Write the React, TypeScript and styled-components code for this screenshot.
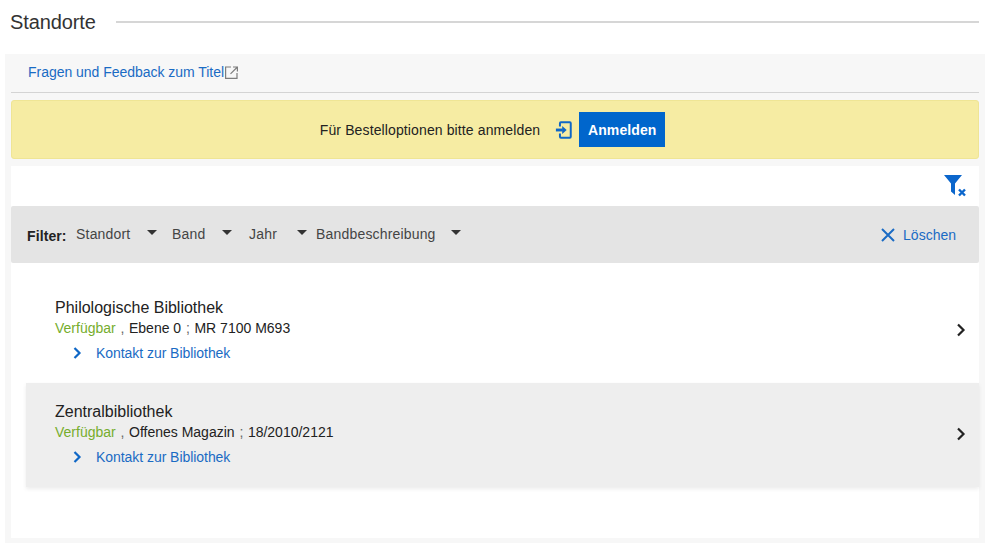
import styled, { createGlobalStyle } from 'styled-components';

const GlobalStyle = createGlobalStyle`
  html, body {
    margin: 0;
    padding: 0;
    background: #fff;
  }
  * {
    box-sizing: border-box;
  }
  body {
    font-family: 'Liberation Sans', Arial, sans-serif;
    color: #222;
  }
`;

const Page = styled.div`
  width: 990px;
  height: 551px;
  overflow: hidden;
  padding: 0 5px;
`;

const Heading = styled.div`
  height: 54px;
  display: flex;
  align-items: flex-start;
  gap: 20px;
  padding: 10px 6px 0 5px;
`;

const HeadingText = styled.h2`
  margin: 0;
  font-size: 20px;
  line-height: 24px;
  font-weight: 400;
  letter-spacing: -0.1px;
  color: #333;
`;

const HeadingRule = styled.div`
  flex: 1;
  height: 2px;
  margin-top: 11px;
  background: #d6d6d6;
`;

const Panel = styled.div`
  height: 489px;
  background: #f7f7f7;
  padding: 0 6px 5px;
  display: flex;
  flex-direction: column;
`;

const LinkRow = styled.div`
  height: 39px;
  flex: none;
  display: flex;
  align-items: center;
  padding: 0 0 2px 17px;
  border-bottom: 1px solid #d4d4d4;
`;

const Link = styled.a`
  color: #1a6bc4;
  font-size: 14px;
  letter-spacing: -0.03px;
  text-decoration: none;
`;

const ExternalIcon = styled.svg`
  width: 13px;
  height: 13px;
  margin-left: 1px;
  flex: none;
`;

const Notice = styled.div`
  height: 59px;
  flex: none;
  margin-top: 7px;
  background: #f6eca3;
  border: 1px solid #efe595;
  border-radius: 3px;
  display: flex;
  align-items: center;
  justify-content: center;
  padding-right: 5px;
  font-size: 14px;
  letter-spacing: 0.12px;
  color: #222;
`;

const LoginIcon = styled.svg`
  width: 18px;
  height: 18px;
  margin: 0 6px 0 15px;
  flex: none;
`;

const LoginButton = styled.button`
  width: 86px;
  height: 35px;
  border: 0;
  padding: 0;
  background: #0066cc;
  color: #fff;
  font-family: inherit;
  font-size: 14px;
  font-weight: 700;
  letter-spacing: 0.1px;
`;

const Content = styled.div`
  flex: 1;
  margin-top: 7px;
  background: #fff;
`;

const IconRow = styled.div`
  height: 40px;
  display: flex;
  justify-content: flex-end;
  padding: 8px 12px 0 0;
`;

const FilterBar = styled.div`
  height: 57px;
  background: #e4e4e4;
  border-radius: 2px;
  display: flex;
  align-items: center;
  padding: 0 23px 0 16px;
  font-size: 14px;
`;

const FilterLabel = styled.strong`
  font-size: 14px;
  letter-spacing: 0.1px;
  margin: 2px 9.500px 0 0;
  color: #222;
`;

const Dropdown = styled.div<{ $width: number; $gap: number }>`
  width: ${(p) => p.$width}px;
  margin: 0 ${(p) => p.$gap}px 2px 0;
  display: flex;
  justify-content: space-between;
  align-items: center;
  letter-spacing: 0.17px;
  color: #444;
`;

const Caret = styled.span`
  width: 0;
  height: 0;
  margin: 0 0 3px;
  border-left: 5px solid transparent;
  border-right: 5px solid transparent;
  border-top: 5px solid #333;
`;

const ClearButton = styled.a`
  margin-left: auto;
  display: flex;
  align-items: center;
  gap: 7px;
  color: #1a6bc4;
  font-size: 14px;
`;

const List = styled.div`
  margin: 16px 0 0 15px;
`;

const Item = styled.div<{ $active?: boolean }>`
  height: 104px;
  display: flex;
  align-items: flex-start;
  justify-content: space-between;
  padding: 19px 12px 0 29px;
  background: ${(p) => (p.$active ? '#eeeeee' : '#fff')};
  box-shadow: ${(p) => (p.$active ? '0 2px 4px rgba(0, 0, 0, 0.08)' : 'none')};
`;

const ItemTitle = styled.div`
  font-size: 16px;
  line-height: 20px;
  color: #222;
`;

const ItemMeta = styled.div`
  font-size: 14px;
  line-height: 20px;
  color: #222;
`;

const Available = styled.span`
  color: #76ad2d;
`;

const Separator = styled.span`
  color: #666;
  margin: 0 4.500px 0 1px;
`;

const ContactLink = styled.a`
  display: flex;
  align-items: center;
  gap: 14px;
  margin: 5px 0 0 18px;
  font-size: 14px;
  letter-spacing: -0.05px;
  line-height: 20px;
  color: #1a6bc4;
`;

const ItemChevron = styled.svg`
  width: 12px;
  height: 14px;
  margin-top: 25px;
  flex: none;
`;

const locations = [
  { name: 'Philologische Bibliothek', place: 'Ebene 0', shelf: 'MR 7100 M693' },
  { name: 'Zentralbibliothek', place: 'Offenes Magazin', shelf: '18/2010/2121' },
];

const filters = [
  { label: 'Standort', width: 81, gap: 15 },
  { label: 'Band', width: 60, gap: 17 },
  { label: 'Jahr', width: 58, gap: 9 },
  { label: 'Bandbeschreibung', width: 145, gap: 0 },
];

const App = () => {
  return (
    <Page>
      <GlobalStyle />
      <Heading>
        <HeadingText>Standorte</HeadingText>
        <HeadingRule />
      </Heading>
      <Panel>
        <LinkRow>
          <Link href="#">Fragen und Feedback zum Titel</Link>
          <ExternalIcon viewBox="0 0 13 13" fill="none" stroke="#7d7d7d" strokeWidth="1.2">
            <path d="M12 7v5.400H.6V1H6" />
            <path d="M8 1h4.400v4.400M12.400 1L5.500 7.900" />
          </ExternalIcon>
        </LinkRow>
        <Notice>
          Für Bestelloptionen bitte anmelden
          <LoginIcon viewBox="0 0 20 20" fill="none" stroke="#0f67c6" strokeWidth="2.200">
            <path d="M5.500 6V2.500a1 1 0 0 1 1-1h10a1 1 0 0 1 1 1v15a1 1 0 0 1-1 1h-10a1 1 0 0 1-1-1V14" />
            <path d="M1 10h7.500" strokeWidth="3.200" />
            <path d="M8 5.500L13 10 8 14.500z" fill="#0f67c6" stroke="none" />
          </LoginIcon>
          <LoginButton>Anmelden</LoginButton>
        </Notice>
        <Content>
          <IconRow>
            <svg width="23" height="23" viewBox="0 0 23 23">
              <path d="M0 1h18L11 9.500V21L7 17.500V9.500z" fill="#0b66cc" />
              <path d="M15 15.500l6 6M21 15.500l-6 6" stroke="#0b66cc" strokeWidth="2.400" fill="none" />
            </svg>
          </IconRow>
          <FilterBar>
            <FilterLabel>Filter:</FilterLabel>
            {filters.map((f) => (
              <Dropdown key={f.label} $width={f.width} $gap={f.gap}>
                {f.label}
                <Caret />
              </Dropdown>
            ))}
            <ClearButton>
              <svg width="16" height="16" viewBox="0 0 16 16" fill="none" stroke="#1a6bc4" strokeWidth="2">
                <path d="M2 2l12 12M14 2L2 14" />
              </svg>
              Löschen
            </ClearButton>
          </FilterBar>
          <List>
            {locations.map((loc, i) => (
              <Item key={loc.name} $active={i === 1}>
                <div>
                  <ItemTitle>{loc.name}</ItemTitle>
                  <ItemMeta>
                    <Available>Verfügbar</Available>
                    <Separator> ,</Separator>
                    {loc.place}
                    <Separator> ;</Separator>
                    {loc.shelf}
                  </ItemMeta>
                  <ContactLink>
                    <svg width="9" height="12" viewBox="0 0 9 12" fill="none" stroke="#0f67c6" strokeWidth="2.200">
                      <path d="M1.500 1l5 5-5 5" />
                    </svg>
                    Kontakt zur Bibliothek
                  </ContactLink>
                </div>
                <ItemChevron viewBox="0 0 12 14" fill="none" stroke="#222" strokeWidth="2.200">
                  <path d="M3 1.500l5.500 5.500L3 12.500" />
                </ItemChevron>
              </Item>
            ))}
          </List>
        </Content>
      </Panel>
    </Page>
  );
};

export default App;
